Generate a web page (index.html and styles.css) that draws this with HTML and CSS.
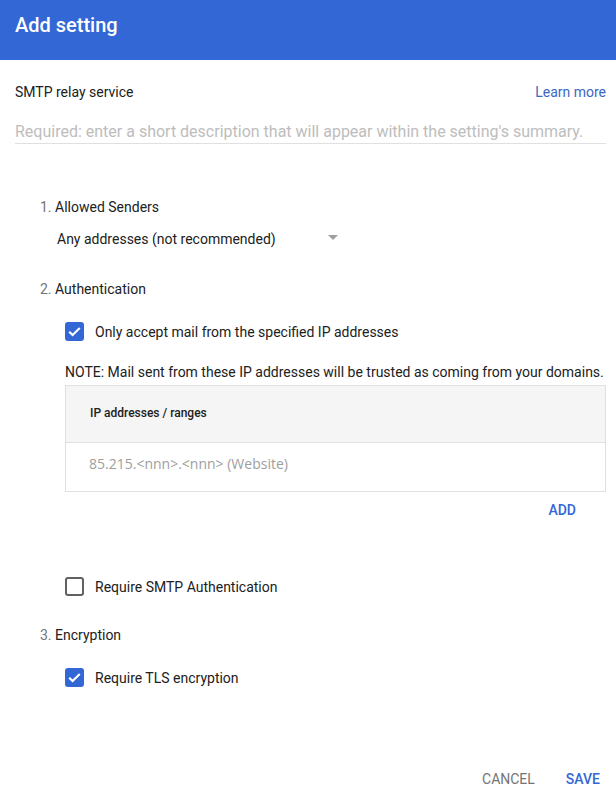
FILE: index.html
```html
<!DOCTYPE html>
<html>
<head>
<meta charset="utf-8">
<link rel="stylesheet" href="styles.css">
</head>
<body>
<header class="bar">Add setting</header>
<main class="content">
  <div class="title-row">
    <span class="title">SMTP relay service</span>
    <a class="link">Learn more</a>
  </div>
  <div class="desc">Required: enter a short description that will appear within the setting's summary.</div>

  <section class="section first">
    <div class="sec-title"><span class="num">1.</span> Allowed Senders</div>
    <div class="select">
      <span>Any addresses (not recommended)</span>
      <span class="arrow"></span>
    </div>
  </section>

  <section class="section">
    <div class="sec-title"><span class="num">2.</span> Authentication</div>
    <label class="check-row">
      <span class="box checked"><svg viewBox="0 0 18 18" width="18" height="18"><path d="M4 9.2l3.2 3.2L14 5.6" fill="none" stroke="#fff" stroke-width="2"/></svg></span>
      <span>Only accept mail from the specified IP addresses</span>
    </label>
    <div class="note">NOTE: Mail sent from these IP addresses will be trusted as coming from your domains.</div>
    <div class="table">
      <div class="thead">IP addresses / ranges</div>
      <div class="trow">85.215.&lt;nnn&gt;.&lt;nnn&gt; (Website)</div>
    </div>
    <div class="add-row"><a class="btn">ADD</a></div>
    <label class="check-row smtp">
      <span class="box"></span>
      <span>Require SMTP Authentication</span>
    </label>
  </section>

  <section class="section enc">
    <div class="sec-title"><span class="num">3.</span> Encryption</div>
    <label class="check-row">
      <span class="box checked"><svg viewBox="0 0 18 18" width="18" height="18"><path d="M4 9.2l3.2 3.2L14 5.6" fill="none" stroke="#fff" stroke-width="2"/></svg></span>
      <span>Require TLS encryption</span>
    </label>
  </section>

  <div class="actions">
    <a class="btn grey">CANCEL</a>
    <a class="btn">SAVE</a>
  </div>
</main>
</body>
</html>
```

FILE: styles.css
```css
* { box-sizing: border-box; }
html, body { margin: 0; padding: 0; background: #fff; }
body {
  font-family: Roboto, "Noto Sans", sans-serif;
  color: #212121;
  font-size: 14px;
  width: 616px;
}
.bar {
  height: 60px;
  background: #3367d6;
  color: #fff;
  font-size: 20px;
  font-weight: 500;
  padding: 11px 15px 0;
  line-height: 28px;
}
.content {
  padding: 0 10px 0 15px;
}
.title-row {
  display: flex;
  justify-content: space-between;
  align-items: center;
  padding-top: 23px;
  line-height: 18px;
}
.title { color: #212121; }
.link { color: #3c67c5; }
.desc {
  margin-top: 21px;
  font-size: 16px;
  color: #bdbdbd;
  line-height: 20px;
  padding-bottom: 1px;
  border-bottom: 1px solid #e0e0e0;
}
.section {
  padding-left: 25px;
}
.section.first { margin-top: 54px; }
.sec-title {
  line-height: 18px;
  color: #212121;
}
.num { color: #757575; }
.select {
  display: flex;
  align-items: center;
  width: 281px;
  justify-content: space-between;
  margin: 14px 0 0 17px;
  line-height: 18px;
  color: #212121;
}
.arrow {
  width: 0; height: 0;
  border-left: 5px solid transparent;
  border-right: 5px solid transparent;
  border-top: 5px solid #9e9e9e;
  margin-top: -3px;
}
.section + .section { margin-top: 32px; }
.check-row {
  display: flex;
  align-items: center;
  gap: 11px;
  margin-left: 25px;
  line-height: 18px;
  margin-top: 24px;
}
.box {
  width: 19px; height: 19px;
  border: 2px solid #616161;
  border-radius: 3px;
  flex: none;
  display: block;
}
.box.checked {
  background: #3367d6;
  border: none;
}
.box svg { display: block; width: 19px; height: 19px; }
.note {
  margin: 23px 0 0 25px;
  line-height: 16px;
  color: #212121;
  white-space: nowrap;
}
.table {
  margin: 5px 0 0 25px;
  border: 1px solid #e0e0e0;
}
.thead {
  background: #f5f5f5;
  height: 57px;
  line-height: 55px;
  padding-left: 24px;
  font-size: 12px;
  font-weight: 500;
  color: #212121;
  border-bottom: 1px solid #e0e0e0;
}
.trow {
  height: 48px;
  line-height: 42px;
  padding-left: 23px;
  font-family: "Open Sans", sans-serif;
  font-size: 14px;
  color: #9e9e9e;
}
.add-row {
  display: flex;
  justify-content: flex-end;
  padding-right: 30px;
  margin-top: 9px;
  line-height: 18px;
}
.btn {
  color: #3367d6;
  font-weight: 500;
  font-size: 14px;
}
.btn.grey { color: #757575; font-weight: 400; }
.check-row.smtp { margin-top: 58px; }
.section.enc { margin-top: 30px; }
.actions {
  display: flex;
  justify-content: flex-end;
  gap: 31px;
  padding-right: 6px;
  margin-top: 83px;
  line-height: 18px;
}
```
